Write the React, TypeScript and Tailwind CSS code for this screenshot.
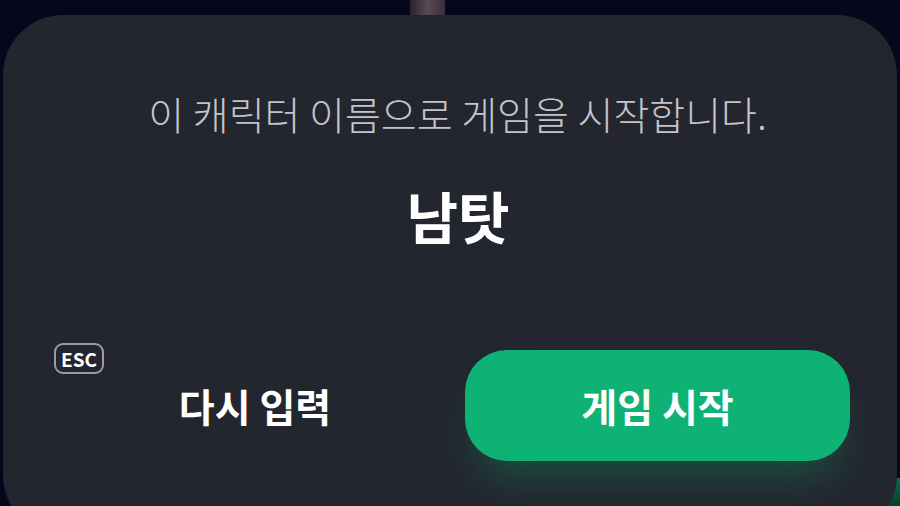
import React from 'react';

// Confirm dialog shown before entering the game with the chosen character name
export default function App() {
  const characterName = '남탓';

  return (
    <div className="relative w-[900px] h-[506px] overflow-hidden bg-[#05071a] font-['Noto_Sans_CJK_KR','Noto_Sans',sans-serif]">
      {/* scene bits peeking around the sheet */}
      <div className="absolute left-[410px] top-0 w-[35px] h-[16px] bg-gradient-to-r from-[#2a2230] via-[#5a4a54] to-[#3a2e3a]" />
      <div className="absolute left-[14px] right-0 top-[478px] bottom-0 rounded-tl-[60px] bg-gradient-to-b from-[#0b6a4b] to-[#063f2e]" />

      <div className="relative mt-[15px] mx-[3px] h-[520px] rounded-[60px] bg-[#23262f] flex flex-col items-center pt-[76px]">
        <p className="ml-[15px] h-[44px] leading-[44px] text-[39px] font-light text-[#c3c5ca]">
          이 캐릭터 이름으로 게임을 시작합니다.
        </p>

        <h2 className="ml-[16px] mt-[48px] h-[64px] leading-[64px] text-[56px] font-bold text-white">
          {characterName}
        </h2>

        <div className="mt-[103px] w-full px-[47px] flex gap-[5px]">
          <button className="relative flex-1 h-[111px] flex items-center justify-center text-[39px] font-bold text-white">
            <span className="absolute left-[4px] -top-[7px] h-[31px] px-[5px] rounded-[9px] border-2 border-[#9a9ca3] flex items-center text-[19px] leading-none font-bold text-white">
              ESC
            </span>
            다시 입력
          </button>
          <button className="w-[385px] h-[111px] rounded-[42px] bg-[#0fb275] flex items-center justify-center text-[39px] font-bold text-white shadow-[0_28px_40px_-12px_rgba(15,178,117,0.28)]">
            게임 시작
          </button>
        </div>
      </div>
    </div>
  );
}
